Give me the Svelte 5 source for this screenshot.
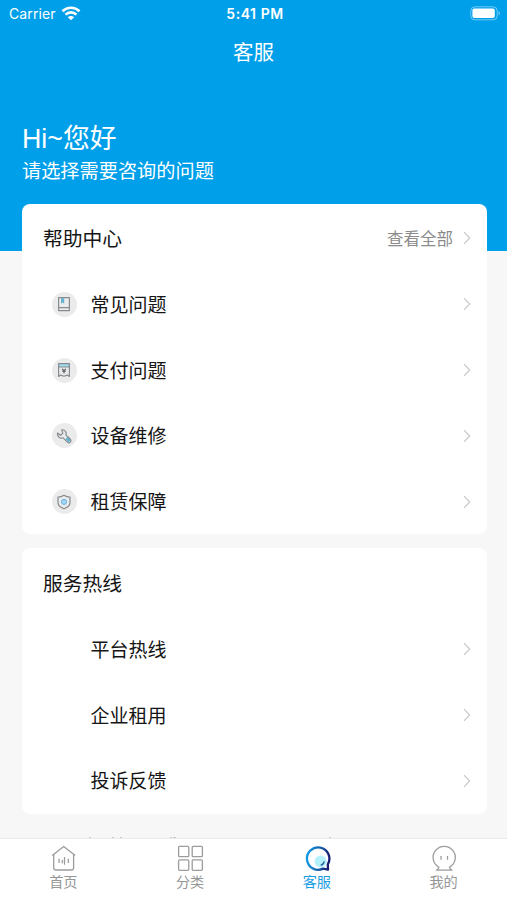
<script lang="ts">
	type HelpIcon = 'book' | 'bill' | 'wrench' | 'shield';
	type TabIcon = 'home' | 'grid' | 'service' | 'mine';

	const helpItems: { icon: HelpIcon; label: string }[] = [
		{ icon: 'book', label: '常见问题' },
		{ icon: 'bill', label: '支付问题' },
		{ icon: 'wrench', label: '设备维修' },
		{ icon: 'shield', label: '租赁保障' }
	];

	const hotlines = ['平台热线', '企业租用', '投诉反馈'];

	const tabs: { icon: TabIcon; label: string }[] = [
		{ icon: 'home', label: '首页' },
		{ icon: 'grid', label: '分类' },
		{ icon: 'service', label: '客服' },
		{ icon: 'mine', label: '我的' }
	];

	let active = $state('service');
</script>

{#snippet chevron()}
	<svg class="chevron" viewBox="0 0 8 14" width="8" height="14">
		<path d="M1 1.2 6.7 7 1 12.8" />
	</svg>
{/snippet}

<div class="page">
	<header class="hero">
		<div class="status-bar">
			<div class="carrier">
				<span>Carrier</span>
				<svg class="wifi" viewBox="0 0 20 15" width="20" height="15">
					<path d="M1.5 5.2a12.2 12.2 0 0 1 17 0" />
					<path d="M4.5 8.6a7.8 7.8 0 0 1 11 0" />
					<path class="dot" d="M6.8 11.2a4.6 4.6 0 0 1 6.400 0L10 14.300z" />
				</svg>
			</div>
			<span class="time">5:41 PM</span>
			<svg class="battery" viewBox="0 0 31 15" width="31" height="15">
				<rect class="shell" x="0.8" y="0.8" width="26.4" height="13" rx="4" />
				<rect class="level" x="2.4" y="2.6" width="22.4" height="9.4" rx="2" />
				<path class="cap" d="M28.6 5v4.6a2.7 2.7 0 0 0 0-4.6z" />
			</svg>
		</div>
		<h1>客服</h1>
		<div class="greeting">
			<p class="hello">Hi~您好</p>
			<p class="hint">请选择需要咨询的问题</p>
		</div>
	</header>

	<main>
		<section class="card">
			<div class="card-head">
				<h2>帮助中心</h2>
				<button class="more">查看全部 {@render chevron()}</button>
			</div>
			{#each helpItems as item}
				<button class="row">
					<span class="row-icon">
						<svg viewBox="0 0 16 16" width="16" height="16">
							{#if item.icon === 'book'}
								<path class="line" d="M2.6 1.6h10.8v13H2.6zM2.6 11.6h10.8" />
								<path class="tint" d="M5 2.2h3.2v5.5L6.6 6.4 5 7.7z" />
							{:else if item.icon === 'bill'}
								<rect class="sky" x="2.8" y="2" width="10.4" height="3" />
								<path class="line" d="M2.6 1.6h10.8v12.8l-2.2-1.3L8 14.2l-3.2-1.1-2.2 1.3zM2.6 5h10.8" />
								<path class="bold" d="m6 6.8 2 1.7 2-1.7M6 9.2h4M8 8.4v3" />
							{:else if item.icon === 'wrench'}
								<path class="tint" d="m9.5 11 2.8-2.8 2.5 3.5-2.2 2.8z" />
								<path class="line" d="M5.8 1.8a3.9 3.9 0 0 1 4.1 5.3l4.4 4.2a2 2 0 0 1-2.9 2.9L7.1 9.8A4.1 4.1 0 0 1 1.6 5l2.900 2.300 2.300-1.900z" />
							{:else}
								<path class="line" d="M8 1.300c1.900 1.300 4 1.800 6 1.800v5.300c0 3-2.600 5-6 6.400-3.400-1.400-6-3.400-6-6.400V3.100c2 0 4.100-.5 6-1.800z" />
								<circle class="gem" cx="8" cy="7.9" r="2.5" />
							{/if}
						</svg>
					</span>
					<span class="row-label">{item.label}</span>
					{@render chevron()}
				</button>
			{/each}
		</section>

		<section class="card hotline">
			<div class="card-head">
				<h2>服务热线</h2>
			</div>
			{#each hotlines as label}
				<button class="row">
					<span class="row-icon blank"></span>
					<span class="row-label">{label}</span>
					{@render chevron()}
				</button>
			{/each}
		</section>
	</main>

	<!-- top edge of the footer line that scrolls under the tab bar -->
	<svg class="peek" viewBox="0 0 507 2" width="507" height="2">
		<path d="M89 1h2M112 1h2M120 1h2M170 1h2M173 1h3M329 1h2" />
	</svg>

	<nav class="tab-bar">
		{#each tabs as tab}
			<button class="tab" class:active={active === tab.icon} onclick={() => (active = tab.icon)}>
				<svg class="tab-icon" viewBox="0 0 28 28" width="28" height="28">
					{#if tab.icon === 'home'}
						<path d="M3.2 11.6 14.7 2.4l11.500 9.200" />
						<path d="M4.700 10.600v13.100q0 2.300 2.300 2.300h15.300q2.300 0 2.300-2.300V10.600" />
						<path d="M10.100 14.800v4.300M13.300 16v3.300M15.500 13v7.800M19.300 14.800v4.300" />
					{:else if tab.icon === 'grid'}
						<rect x="2.6" y="2.3" width="10.2" height="10.4" rx="1" />
						<rect x="16.2" y="2.3" width="10.2" height="10.4" rx="1" />
						<rect x="2.6" y="15.9" width="10.2" height="10.4" rx="1" />
						<rect x="16.2" y="15.9" width="10.2" height="10.4" rx="1" />
					{:else if tab.icon === 'service'}
						<defs>
							<linearGradient id="bubble" x1="0" y1="0.5" x2="1" y2="0.6">
								<stop offset="0" stop-color="#1197e4" />
								<stop offset="0.55" stop-color="#1460ac" />
								<stop offset="1" stop-color="#17196f" />
							</linearGradient>
						</defs>
						<circle class="glow" cx="17.6" cy="17.6" r="6" />
						<path class="bubble" d="M24.800 20.300l.2 5.400-4.800-1.100a11.200 11.200 0 1 1 4.600-4.300z" />
						<path class="smile" d="M21.200 17.300q-.2 3-3.500 4.100" />
					{:else}
						<path d="M9 23.200A11.100 11.100 0 1 1 19.400 23.200q.4 1.800 2.600 3H6.400q2.200-1.200 2.600-3z" />
						<path d="M11 12v3.700M17.500 12v3.700" />
					{/if}
				</svg>
				<span>{tab.label}</span>
			</button>
		{/each}
	</nav>
</div>

<style>
	:global(body) {
		margin: 0;
		background: #f7f7f7;
	}

	.page {
		position: relative;
		height: 900px;
		overflow: hidden;
		background: #f7f7f7;
		font-family: 'Liberation Sans', 'Noto Sans CJK SC', sans-serif;
		color: #151515;
	}

	button {
		border: none;
		padding: 0;
		background: none;
		font: inherit;
		color: inherit;
		cursor: pointer;
	}

	h1,
	h2,
	p {
		margin: 0;
		font-weight: 400;
	}

	/* Header */
	.hero {
		height: 251px;
		background: #009fe9;
		color: #fff;
	}

	.status-bar {
		display: grid;
		grid-template-columns: 1fr auto 1fr;
		align-items: center;
		height: 27px;
		padding: 0 6px 0 9px;
		box-sizing: border-box;
		font-family: Inter, sans-serif;
		font-size: 14px;
	}

	.carrier {
		display: flex;
		align-items: center;
		gap: 5px;
		letter-spacing: 0.1px;
	}

	.wifi {
		fill: none;
		stroke: #fff;
		stroke-width: 2.6;
	}

	.wifi .dot {
		fill: #fff;
		stroke: none;
	}

	.time {
		font-weight: 600;
		font-size: 14px;
		letter-spacing: 0.55px;
	}

	.battery {
		justify-self: end;
	}

	.battery .shell {
		fill: none;
		stroke: #fff;
		opacity: 0.45;
	}

	.battery .level {
		fill: #fff;
	}

	.battery .cap {
		fill: #fff;
		opacity: 0.5;
	}

	h1 {
		height: 50px;
		line-height: 52px;
		font-size: 20.5px;
		text-align: center;
	}

	.greeting {
		padding: 44px 22px 0;
	}

	.hello {
		font-size: 26.8px;
		line-height: 36px;
	}

	.hint {
		font-size: 19.2px;
		line-height: 30px;
	}

	/* Cards */
	main {
		display: flex;
		flex-direction: column;
		gap: 14px;
		margin: -47px 20px 0 22px;
		position: relative;
	}

	.card {
		background: #fff;
		border-radius: 8px;
	}

	.card-head {
		display: flex;
		align-items: center;
		justify-content: space-between;
		height: 67.6px;
		padding: 0 16px 0 21px;
	}

	.hotline .card-head {
		height: 68.2px;
	}

	h2 {
		font-size: 19.8px;
	}

	.more {
		display: flex;
		align-items: center;
		gap: 10px;
		font-size: 16.5px;
		color: #8b8b8b;
	}

	.row {
		display: flex;
		align-items: center;
		width: 100%;
		height: 65.7px;
		padding: 0 16px 0 29.5px;
		box-sizing: border-box;
		text-align: left;
	}

	.row-icon {
		display: flex;
		align-items: center;
		justify-content: center;
		width: 25px;
		height: 25px;
		margin-right: 14px;
		border-radius: 50%;
		background: #ebebeb;
	}

	.row-icon.blank {
		background: none;
	}

	.row-label {
		flex: 1;
		padding-bottom: 2px;
		font-size: 19px;
	}

	.line {
		fill: none;
		stroke: #858b90;
		stroke-width: 1.2;
		stroke-linejoin: round;
	}

	.bold {
		fill: none;
		stroke: #5a5f63;
		stroke-width: 1.1;
	}

	.tint {
		fill: #63b2d0;
	}

	.sky {
		fill: #a5d9ed;
	}

	.gem {
		fill: #a7d8f4;
		stroke: #5caee0;
	}

	.chevron {
		fill: none;
		stroke: #c8c8c8;
		stroke-width: 1.2;
	}

	.peek {
		position: absolute;
		left: 0;
		bottom: 61px;
		stroke: #bcbcbc;
		stroke-width: 1.5;
	}

	/* Tab bar */
	.tab-bar {
		position: absolute;
		left: 0;
		right: 0;
		bottom: 0;
		display: grid;
		grid-template-columns: repeat(4, 1fr);
		height: 61px;
		background: #fff;
		box-shadow: 0 -1px 0 #eaeaea;
	}

	.tab {
		display: flex;
		flex-direction: column;
		align-items: center;
		padding-top: 5px;
		font-size: 14.2px;
		line-height: 20px;
		color: #969696;
	}

	.tab.active {
		color: #1b9de4;
	}

	.tab-icon {
		fill: none;
		stroke: #9c9c9c;
		stroke-width: 1.3;
		stroke-linejoin: round;
	}

	.tab-icon .glow {
		fill: #b5f1fb;
		stroke: none;
	}

	.tab-icon .bubble {
		stroke: url(#bubble);
		stroke-width: 2.3;
	}

	.tab-icon .smile {
		stroke: #246397;
		stroke-width: 1.3;
	}
</style>
